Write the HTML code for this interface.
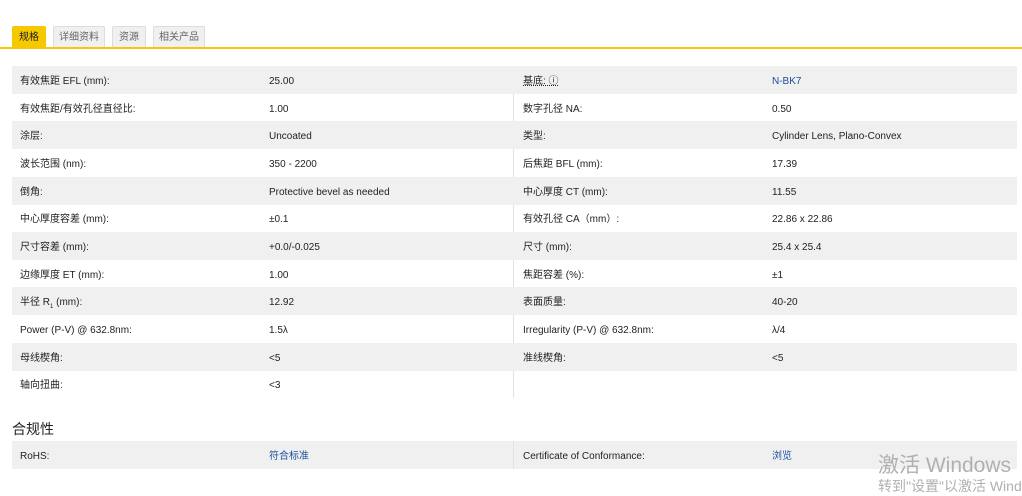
<!DOCTYPE html>
<html><head><meta charset="utf-8"><style>
*{margin:0;padding:0;box-sizing:border-box}
body{width:1022px;height:492px;background:#fff;font-family:"Liberation Sans","Noto Sans CJK SC",sans-serif;font-size:10px;color:#222;position:relative;overflow:hidden}
.tab{position:absolute;top:26px;height:22px;line-height:22px;font-size:10px;color:#666;background:#f0f0f0;border:1px solid #ddd;border-bottom:none;text-align:center;border-radius:2px 2px 0 0}
.tab.a{background:#f6c800;color:#222;border-color:#f6c800}
.line{position:absolute;left:0;top:47px;width:1022px;height:2px;background:#f6c800}
.row{position:absolute;height:28px;line-height:28px;white-space:nowrap}
.g{background:#f0f0f0}
.c{position:absolute;top:2px}
.blue{color:#1a4f9c}
.vl{position:absolute;left:513px;width:1px;background:#e2e2e2}
</style></head><body>
<div class="tab a" style="left:12px;width:34px">规格</div>
<div class="tab" style="left:53px;width:52px">详细资料</div>
<div class="tab" style="left:112px;width:34px">资源</div>
<div class="tab" style="left:153px;width:52px">相关产品</div>
<div class="line"></div>

<div class="vl" style="top:66px;height:332px"></div>

<div class="row g" style="top:66px;left:12px;width:1005px"><span class="c" style="left:8px">有效焦距 EFL (mm):</span><span class="c" style="left:257px">25.00</span><span class="c" style="left:511px;text-decoration:underline dotted">基底: ⓘ</span><span class="c blue" style="left:760px">N-BK7</span></div>
<div class="row" style="top:94px;left:12px;width:1005px"><span class="c" style="left:8px">有效焦距/有效孔径直径比:</span><span class="c" style="left:257px">1.00</span><span class="c" style="left:511px">数字孔径 NA:</span><span class="c" style="left:760px">0.50</span></div>
<div class="row g" style="top:121px;left:12px;width:1005px"><span class="c" style="left:8px">涂层:</span><span class="c" style="left:257px">Uncoated</span><span class="c" style="left:511px">类型:</span><span class="c" style="left:760px">Cylinder Lens, Plano-Convex</span></div>
<div class="row" style="top:149px;left:12px;width:1005px"><span class="c" style="left:8px">波长范围 (nm):</span><span class="c" style="left:257px">350 - 2200</span><span class="c" style="left:511px">后焦距 BFL (mm):</span><span class="c" style="left:760px">17.39</span></div>
<div class="row g" style="top:177px;left:12px;width:1005px"><span class="c" style="left:8px">倒角:</span><span class="c" style="left:257px">Protective bevel as needed</span><span class="c" style="left:511px">中心厚度 CT (mm):</span><span class="c" style="left:760px">11.55</span></div>
<div class="row" style="top:204px;left:12px;width:1005px"><span class="c" style="left:8px">中心厚度容差 (mm):</span><span class="c" style="left:257px">±0.1</span><span class="c" style="left:511px">有效孔径 CA（mm）:</span><span class="c" style="left:760px">22.86 x 22.86</span></div>
<div class="row g" style="top:232px;left:12px;width:1005px"><span class="c" style="left:8px">尺寸容差 (mm):</span><span class="c" style="left:257px">+0.0/-0.025</span><span class="c" style="left:511px">尺寸 (mm):</span><span class="c" style="left:760px">25.4 x 25.4</span></div>
<div class="row" style="top:260px;left:12px;width:1005px"><span class="c" style="left:8px">边缘厚度 ET (mm):</span><span class="c" style="left:257px">1.00</span><span class="c" style="left:511px">焦距容差 (%):</span><span class="c" style="left:760px">±1</span></div>
<div class="row g" style="top:287px;left:12px;width:1005px"><span class="c" style="left:8px">半径 R<sub style="font-size:6px">1</sub> (mm):</span><span class="c" style="left:257px">12.92</span><span class="c" style="left:511px">表面质量:</span><span class="c" style="left:760px">40-20</span></div>
<div class="row" style="top:315px;left:12px;width:1005px"><span class="c" style="left:8px">Power (P-V) @ 632.8nm:</span><span class="c" style="left:257px">1.5λ</span><span class="c" style="left:511px">Irregularity (P-V) @ 632.8nm:</span><span class="c" style="left:760px">λ/4</span></div>
<div class="row g" style="top:343px;left:12px;width:1005px"><span class="c" style="left:8px">母线楔角:</span><span class="c" style="left:257px">&lt;5</span><span class="c" style="left:511px">准线楔角:</span><span class="c" style="left:760px">&lt;5</span></div>
<div class="row" style="top:370px;left:12px;width:1005px"><span class="c" style="left:8px">轴向扭曲:</span><span class="c" style="left:257px">&lt;3</span></div>

<div style="position:absolute;left:12px;top:419px;font-size:14px;color:#222">合规性</div>
<div class="row g" style="top:441px;left:12px;width:1005px"><span class="c" style="left:8px">RoHS:</span><span class="c blue" style="left:257px">符合标准</span><span class="c" style="left:511px">Certificate of Conformance:</span><span class="c blue" style="left:760px">浏览</span></div>
<div class="vl" style="top:441px;height:28px"></div>

<div style="position:absolute;left:878px;top:449px;font-size:21px;color:#b0b0b0;white-space:nowrap">激活 Windows</div>
<div style="position:absolute;left:878px;top:476px;font-size:14px;color:#b0b0b0;white-space:nowrap">转到"设置"以激活 Windows。</div>
</body></html>
